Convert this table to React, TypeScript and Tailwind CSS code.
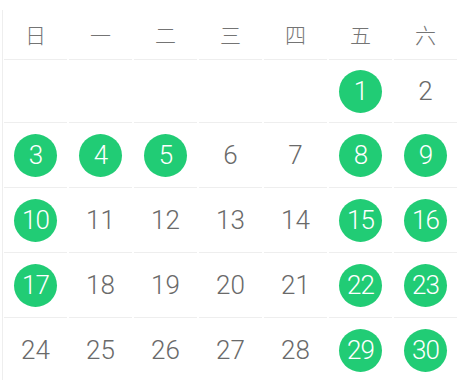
import React from 'react';

const weekDays = ['日', '一', '二', '三', '四', '五', '六'];

// days marked as signed in
const checked = new Set([1, 3, 4, 5, 8, 9, 10, 15, 16, 17, 22, 23, 29, 30]);

// month starts on Friday
const firstOffset = 5;
const daysInMonth = 30;

export default function App() {
  const cells: (number | null)[] = [];
  for (let i = 0; i < firstOffset; i++) cells.push(null);
  for (let d = 1; d <= daysInMonth; d++) cells.push(d);

  return (
    <div
      className="min-h-screen bg-white pt-[10px] pl-[2px]"
      style={{ fontFamily: 'Roboto, "Noto Sans CJK SC", sans-serif' }}
    >
      <div className="grid w-[456px] grid-cols-7 grid-rows-[50px_63px_65px_65px_65px_65px] border-l border-[#eeeeee]">
        {weekDays.map((w) => (
          <div key={w} className="flex flex-col">
            <div
              className="flex flex-1 items-center justify-center pt-[1px] text-[21px] font-light text-[#747474]"
              style={{ fontFamily: '"Noto Sans CJK SC", sans-serif' }}
            >
              {w}
            </div>
            <div className="mx-[1px] h-px bg-[#eeeeee]" />
          </div>
        ))}
        {cells.map((d, i) => (
          <div key={i} className="flex flex-col">
            <div className="flex flex-1 items-center justify-center">
              {d !== null &&
                (checked.has(d) ? (
                  <span className="flex h-[43px] w-[43px] items-center justify-center rounded-full bg-[#21cc75] text-[26px] font-light tracking-[-1px] text-white">
                    {d}
                  </span>
                ) : (
                  <span className="text-[26px] font-light text-[#6a6a6a]">{d}</span>
                ))}
            </div>
            {i < 28 && <div className="mx-[1px] h-px bg-[#eeeeee]" />}
          </div>
        ))}
      </div>
    </div>
  );
}
